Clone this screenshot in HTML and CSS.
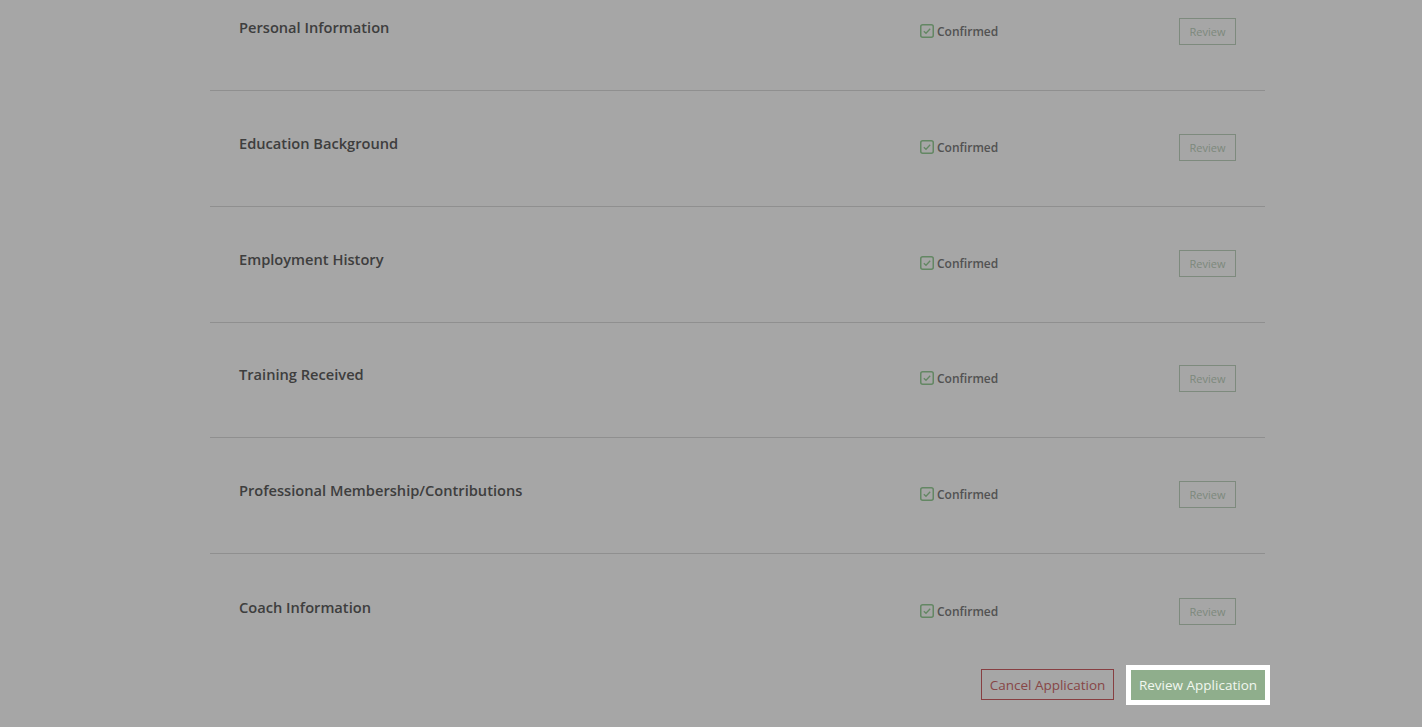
FILE: index.html
```html
<!DOCTYPE html>
<html lang="en">
<head>
<meta charset="utf-8">
<title>Application Summary</title>
<link rel="stylesheet" href="styles.css">
</head>
<body>
<main class="page">
  <section class="sections">
    <div class="row">
      <h3 class="row-title">Personal Information</h3>
      <div class="status"><svg class="check" viewBox="0 0 14 14" width="14" height="14"><rect x="0.75" y="0.75" width="12.5" height="12.5" rx="2" fill="none" stroke="currentColor" stroke-width="1.5"/><path d="M3.8 7.2 L6 9.3 L10.2 4.8" fill="none" stroke="currentColor" stroke-width="1.3"/></svg><span>Confirmed</span></div>
      <button class="btn-review">Review</button>
    </div>
    <div class="row">
      <h3 class="row-title">Education Background</h3>
      <div class="status"><svg class="check" viewBox="0 0 14 14" width="14" height="14"><rect x="0.75" y="0.75" width="12.5" height="12.5" rx="2" fill="none" stroke="currentColor" stroke-width="1.5"/><path d="M3.8 7.2 L6 9.3 L10.2 4.8" fill="none" stroke="currentColor" stroke-width="1.3"/></svg><span>Confirmed</span></div>
      <button class="btn-review">Review</button>
    </div>
    <div class="row">
      <h3 class="row-title">Employment History</h3>
      <div class="status"><svg class="check" viewBox="0 0 14 14" width="14" height="14"><rect x="0.75" y="0.75" width="12.5" height="12.5" rx="2" fill="none" stroke="currentColor" stroke-width="1.5"/><path d="M3.8 7.2 L6 9.3 L10.2 4.8" fill="none" stroke="currentColor" stroke-width="1.3"/></svg><span>Confirmed</span></div>
      <button class="btn-review">Review</button>
    </div>
    <div class="row">
      <h3 class="row-title">Training Received</h3>
      <div class="status"><svg class="check" viewBox="0 0 14 14" width="14" height="14"><rect x="0.75" y="0.75" width="12.5" height="12.5" rx="2" fill="none" stroke="currentColor" stroke-width="1.5"/><path d="M3.8 7.2 L6 9.3 L10.2 4.8" fill="none" stroke="currentColor" stroke-width="1.3"/></svg><span>Confirmed</span></div>
      <button class="btn-review">Review</button>
    </div>
    <div class="row">
      <h3 class="row-title">Professional Membership/Contributions</h3>
      <div class="status"><svg class="check" viewBox="0 0 14 14" width="14" height="14"><rect x="0.75" y="0.75" width="12.5" height="12.5" rx="2" fill="none" stroke="currentColor" stroke-width="1.5"/><path d="M3.8 7.2 L6 9.3 L10.2 4.8" fill="none" stroke="currentColor" stroke-width="1.3"/></svg><span>Confirmed</span></div>
      <button class="btn-review">Review</button>
    </div>
    <div class="row row-last">
      <h3 class="row-title">Coach Information</h3>
      <div class="status"><svg class="check" viewBox="0 0 14 14" width="14" height="14"><rect x="0.75" y="0.75" width="12.5" height="12.5" rx="2" fill="none" stroke="currentColor" stroke-width="1.5"/><path d="M3.8 7.2 L6 9.3 L10.2 4.8" fill="none" stroke="currentColor" stroke-width="1.3"/></svg><span>Confirmed</span></div>
      <button class="btn-review">Review</button>
    </div>
  </section>
  <div class="actions">
    <button class="btn-cancel">Cancel Application</button>
    <div class="highlight">
      <button class="btn-submit">Review Application</button>
    </div>
  </div>
</main>
<div class="overlay"></div>
</body>
</html>
```

FILE: styles.css
```css
* { box-sizing: border-box; }

html {
  overflow: hidden;
  background: #ffffff;
}

body {
  margin: 0;
  padding: 0;
  background: #ffffff;
  font-family: "Open Sans", "Liberation Sans", sans-serif;
}

.page {
  width: 1055px;
  margin-left: 210px;
  padding-bottom: 20px;
}

.sections {
  margin-top: -24.75px;
}

.row {
  display: grid;
  grid-template-columns: 1fr 259px auto;
  align-items: center;
  height: 115.75px;
  padding: 0 29px 2px;
  border-bottom: 1px solid #dcdcdc;
}

.row-last {
  border-bottom: none;
  height: 116px;
}

.row-title {
  margin: 0 0 9px 0;
  font-size: 14.65px;
  font-weight: 600;
  color: #606060;
  line-height: 22px;
}

.status {
  display: flex;
  align-items: center;
  gap: 3px;
  color: #7e7e7e;
  font-size: 12px;
  font-weight: 600;
}

.check {
  color: #98cf98;
  display: block;
  margin-top: -1px;
}

.btn-review {
  font-family: inherit;
  font-size: 11px;
  line-height: 15px;
  height: 27px;
  width: 57px;
  padding: 0;
  background: transparent;
  color: #bfd3bf;
  border: 1px solid #c0d4c0;
  border-radius: 0;
}

.actions {
  display: flex;
  justify-content: flex-end;
  align-items: center;
  gap: 12px;
  margin-top: -1px;
}

.btn-cancel {
  font-family: inherit;
  font-size: 13.5px;
  height: 31px;
  width: 133px;
  padding: 0;
  background: transparent;
  color: #d06d6d;
  border: 1px solid #d06266;
  border-radius: 0;
}

.highlight {
  position: relative;
  z-index: 20;
  background: #ffffff;
  padding: 5px;
  margin: -5px -5px -5px 0;
}

.btn-submit {
  display: block;
  font-family: inherit;
  font-size: 13.5px;
  height: 30px;
  width: 134px;
  padding: 0;
  background: #8fae8c;
  color: #f1f7ef;
  border: none;
  border-radius: 0;
}

.overlay {
  position: fixed;
  inset: 0;
  background: rgba(0, 0, 0, 0.35);
  z-index: 10;
}
```
